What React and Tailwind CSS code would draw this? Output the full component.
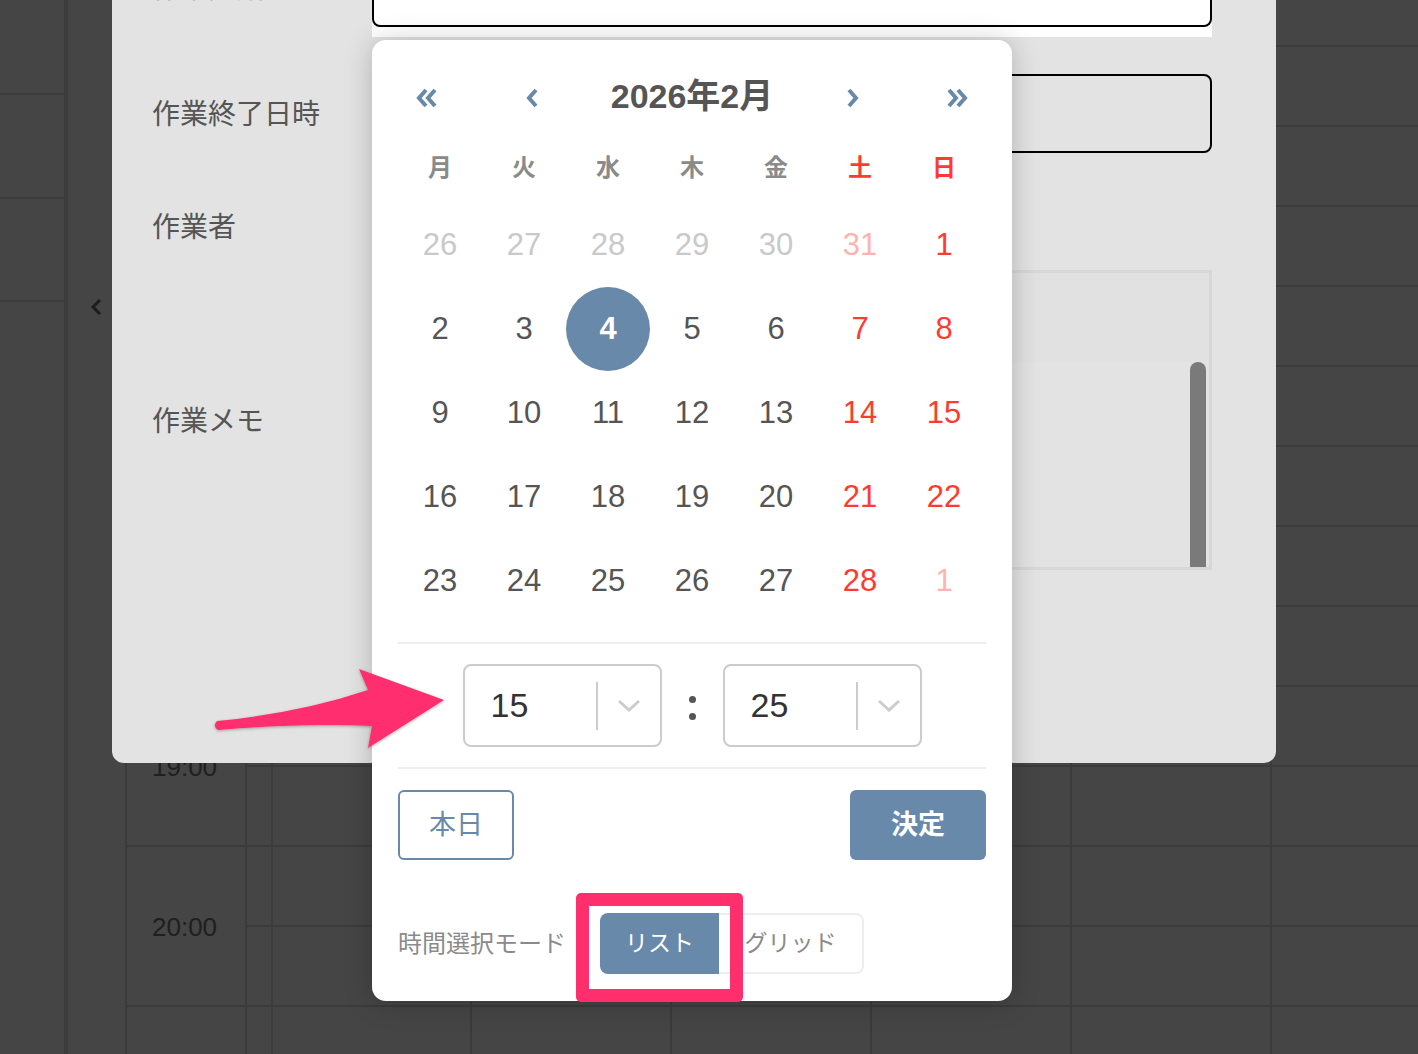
import React from 'react';

const WEEK = ['月', '火', '水', '木', '金', '土', '日'];

// m = muted (prev / next month), s = selected
const ROWS = [
  [{ d: 26, m: true }, { d: 27, m: true }, { d: 28, m: true }, { d: 29, m: true }, { d: 30, m: true }, { d: 31, m: true }, { d: 1 }],
  [{ d: 2 }, { d: 3 }, { d: 4, s: true }, { d: 5 }, { d: 6 }, { d: 7 }, { d: 8 }],
  [{ d: 9 }, { d: 10 }, { d: 11 }, { d: 12 }, { d: 13 }, { d: 14 }, { d: 15 }],
  [{ d: 16 }, { d: 17 }, { d: 18 }, { d: 19 }, { d: 20 }, { d: 21 }, { d: 22 }],
  [{ d: 23 }, { d: 24 }, { d: 25 }, { d: 26 }, { d: 27 }, { d: 28 }, { d: 1, m: true }],
];

function dayColor(cell, col) {
  const weekend = col >= 5;
  if (cell.m) return weekend ? 'text-[#ffb3ae]' : 'text-[#c9c9c9]';
  return weekend ? 'text-[#ff3b30]' : 'text-[#555555]';
}

function DayColumn({ className }) {
  return (
    <div className={`flex flex-col border-l-2 border-[#3b3b3b] ${className}`}>
      <div className="h-[47px] shrink-0 border-b-2 border-[#3b3b3b]" />
      {Array.from({ length: 13 }).map((_, i) => (
        <div key={i} className="h-[80px] shrink-0 border-b-2 border-[#3b3b3b]" />
      ))}
    </div>
  );
}

function Background() {
  // only the hours that show below the modal carry a label
  const hours = ['', '', '', '', '19:00', '20:00', ''];
  return (
    <div className="flex h-full">
      {/* sidebar */}
      <div className="w-[64px] shrink-0 flex flex-col">
        <div className="h-[95px] border-b-2 border-[#3b3b3b]" />
        <div className="h-[104px] border-b-2 border-[#3b3b3b]" />
        <div className="h-[103px] border-b-2 border-[#3b3b3b]" />
      </div>
      <div className="w-[4px] shrink-0 bg-[#3c3c3f]" />
      <div className="w-[57px] shrink-0 pt-[298px] pl-[22px]">
        <svg width="12" height="18" viewBox="0 0 12 18">
          <polyline points="10,2 3,9 10,16" fill="none" stroke="#1c1c1c" strokeWidth="3" />
        </svg>
      </div>
      {/* time column */}
      <div className="w-[120px] shrink-0 flex flex-col border-l-2 border-[#3b3b3b]">
        <div className="h-[47px] shrink-0" />
        {hours.map((h, i) => (
          <div key={i} className="h-[160px] shrink-0 border-b-2 border-[#3b3b3b] flex items-center pl-[25px] pt-[2px] text-[26px] text-[#1f1f1f]">
            {h}
          </div>
        ))}
      </div>
      <DayColumn className="w-[26px] shrink-0" />
      <DayColumn className="w-[199px] shrink-0" />
      <DayColumn className="w-[200px] shrink-0" />
      <DayColumn className="w-[200px] shrink-0" />
      <DayColumn className="w-[200px] shrink-0" />
      <DayColumn className="w-[200px] shrink-0" />
      <DayColumn className="flex-1" />
    </div>
  );
}

function Modal() {
  return (
    <div className="absolute left-[112px] top-0 w-[1164px] h-[763px] bg-[#e3e3e3] rounded-b-[12px] overflow-hidden">
      <div className="flex flex-col pl-[40px] pr-[64px] mt-[-52px] text-[28px] text-[#555555]">
        <div className="flex h-[89px]">
          <div className="w-[220px] h-[79px] flex items-center pt-[3px]">作業開始日時</div>
          <div className="flex-1 bg-white">
            <div className="h-[79px] rounded-lg border-2 border-black bg-white flex items-center pl-[20px] text-[#333]">
              2026/02/04 15:00
            </div>
          </div>
        </div>
        <div className="flex h-[79px] items-center mt-[37px]">
          <div className="w-[220px] pt-[3px]">作業終了日時</div>
          <div className="flex-1 h-full rounded-lg border-2 border-black" />
        </div>
        <div className="flex h-[44px] items-center mt-[51px]">
          <div className="w-[220px] pt-[3px]">作業者</div>
        </div>
        <div className="flex h-[300px] items-center mt-[22px]">
          <div className="w-[220px] pt-[3px]">作業メモ</div>
          <div className="flex-1 h-full border-[3px] border-[#d7d7d7] bg-[#e1e1e1] flex flex-col">
            <div className="h-[89px] shrink-0" />
            <div className="flex-1 bg-[#e3e3e3] flex justify-end pr-[3px]">
              <div className="w-[16px] h-full bg-[#7a7a7a] rounded-t-full" />
            </div>
          </div>
        </div>
      </div>
    </div>
  );
}

function Chevron({ dir, double }) {
  const pts = dir === 'left' ? ['10,3 3,11 10,19', '19,3 12,11 19,19'] : ['3,3 10,11 3,19', '12,3 19,11 12,19'];
  if (double) {
    return (
      <svg width="22" height="22" viewBox="0 0 22 22">
        <polyline points={pts[0]} fill="none" stroke="#6889a9" strokeWidth="4" />
        <polyline points={pts[1]} fill="none" stroke="#6889a9" strokeWidth="4" />
      </svg>
    );
  }
  return (
    <svg width="13" height="22" viewBox="0 0 13 22">
      <polyline points={dir === 'left' ? '10,3 3,11 10,19' : '3,3 10,11 3,19'} fill="none" stroke="#6889a9" strokeWidth="4" />
    </svg>
  );
}

function TimeSelect({ value }) {
  return (
    <div className="w-[199px] h-[83px] rounded-lg border-2 border-[#cccccc] flex items-center">
      <div className="w-[131px] pl-[26px] text-[34px] text-[#333333]">{value}</div>
      <div className="w-[2px] h-[48px] bg-[#cccccc]" />
      <div className="flex-1 flex justify-center">
        <svg width="24" height="14" viewBox="0 0 24 14">
          <polyline points="2,2 12,11 22,2" fill="none" stroke="#cccccc" strokeWidth="3" />
        </svg>
      </div>
    </div>
  );
}

function DatePicker() {
  return (
    <div className="absolute left-[372px] top-[40px] w-[640px] h-[961px] bg-white rounded-[14px] shadow-[0_2px_28px_rgba(0,0,0,0.22)] px-[26px] pt-[32px]">
      <div className="flex h-[48px] items-center">
        <div className="w-[58px] flex justify-center pt-[4px]"><Chevron dir="left" double /></div>
        <div className="w-[152px] flex justify-center pt-[4px]"><Chevron dir="left" /></div>
        <div className="w-[168px] text-center text-[34px] font-bold text-[#555555]">2026年2月</div>
        <div className="w-[152px] flex justify-center pt-[4px]"><Chevron dir="right" /></div>
        <div className="w-[58px] flex justify-center pt-[4px]"><Chevron dir="right" double /></div>
      </div>
      <div className="grid grid-cols-7 h-[48px] items-center mt-[24px] text-[24px] font-bold">
        {WEEK.map((w, i) => (
          <div key={w} className={`text-center ${i >= 5 ? 'text-[#ff3b30]' : 'text-[#8a8a8a]'}`}>{w}</div>
        ))}
      </div>
      <div className="mt-[11px] flex flex-col">
        {ROWS.map((row, r) => (
          <div key={r} className="grid grid-cols-7 h-[84px]">
            {row.map((cell, c) => (
              <div key={c} className="flex items-center justify-center">
                {cell.s ? (
                  <div className="w-[84px] h-[84px] rounded-full bg-[#6889a9] flex items-center justify-center text-[31px] font-bold text-white">
                    {cell.d}
                  </div>
                ) : (
                  <span className={`text-[31px] ${dayColor(cell, c)}`}>{cell.d}</span>
                )}
              </div>
            ))}
          </div>
        ))}
      </div>
      <div className="mt-[19px] h-[2px] bg-[#eeeeee]" />
      <div className="mt-[20px] flex items-center justify-center">
        <TimeSelect value="15" />
        <div className="w-[61px] flex flex-col items-center gap-[10px] pt-[4px]">
          <div className="w-[7px] h-[7px] rounded-full bg-[#555555]" />
          <div className="w-[7px] h-[7px] rounded-full bg-[#555555]" />
        </div>
        <TimeSelect value="25" />
      </div>
      <div className="mt-[20px] h-[2px] bg-[#eeeeee]" />
      <div className="mt-[21px] flex justify-between">
        <button className="w-[116px] h-[70px] rounded-md border-2 border-[#6889a9] text-[27px] text-[#6889a9]">本日</button>
        <button className="w-[136px] h-[70px] rounded-md bg-[#6889a9] text-[27px] font-bold text-white">決定</button>
      </div>
      <div className="mt-[53px] flex items-center">
        <div className="w-[202px] text-[24px] text-[#8a8a8a]">時間選択モード</div>
        <div className="flex h-[61px]">
          <div className="w-[119px] rounded-l-lg bg-[#6889a9] flex items-center justify-center text-[23px] text-white">リスト</div>
          <div className="w-[145px] rounded-r-lg border-2 border-l-0 border-[#eeeeee] flex items-center justify-center text-[23px] text-[#8a8a8a]">グリッド</div>
        </div>
      </div>
    </div>
  );
}

function Annotations() {
  return (
    <>
      <div className="absolute left-[576px] top-[893px] w-[167px] h-[109px] border-[13px] border-[#ff2f6e] rounded-[5px]" />
      <svg className="absolute left-0 top-0 pointer-events-none" width="1418" height="1054">
        <defs>
          <filter id="sh" x="-10%" y="-20%" width="120%" height="140%">
            <feDropShadow dx="0" dy="1" stdDeviation="1.5" floodColor="#000" floodOpacity="0.3" />
          </filter>
        </defs>
        <path
          d="M 217 721 Q 300 713 368 690 L 359 669 L 444 700 L 368 748 L 372 726 Q 300 723 218 730 Q 212 726 217 721 Z"
          fill="#ff2f6e"
          filter="url(#sh)"
        />
      </svg>
    </>
  );
}

export default function App() {
  return (
    <div className="relative w-[1418px] h-[1054px] overflow-hidden bg-[#454545] font-['Liberation_Sans','Noto_Sans_CJK_JP',sans-serif]">
      <Background />
      <Modal />
      <DatePicker />
      <Annotations />
    </div>
  );
}
